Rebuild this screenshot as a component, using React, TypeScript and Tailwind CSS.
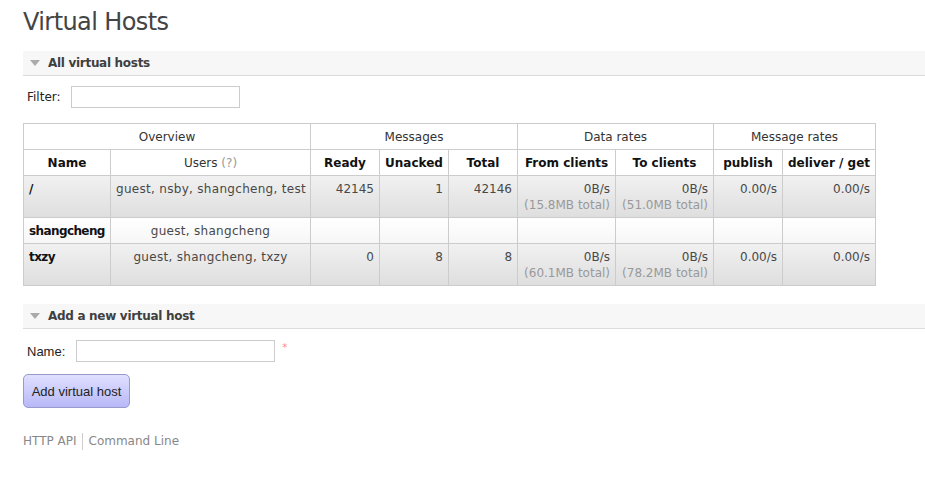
import React from 'react';

type Row = {
  name: string;
  users: string;
  ready?: string;
  unacked?: string;
  total?: string;
  fromRate?: string;
  fromTotal?: string;
  toRate?: string;
  toTotal?: string;
  publish?: string;
  deliver?: string;
};

const ROWS: Row[] = [
  {
    name: '/',
    users: 'guest, nsby, shangcheng, test',
    ready: '42145',
    unacked: '1',
    total: '42146',
    fromRate: '0B/s',
    fromTotal: '(15.8MB total)',
    toRate: '0B/s',
    toTotal: '(51.0MB total)',
    publish: '0.00/s',
    deliver: '0.00/s',
  },
  { name: 'shangcheng', users: 'guest, shangcheng' },
  {
    name: 'txzy',
    users: 'guest, shangcheng, txzy',
    ready: '0',
    unacked: '8',
    total: '8',
    fromRate: '0B/s',
    fromTotal: '(60.1MB total)',
    toRate: '0B/s',
    toTotal: '(78.2MB total)',
    publish: '0.00/s',
    deliver: '0.00/s',
  },
];

const SectionHeader: React.FC<{ title: string }> = ({ title }) => (
  <div className="flex h-[25px] items-center border-b border-[#dcdcdc] bg-[#f7f7f7] pl-[7px]">
    <span className="mr-[8px] h-0 w-0 border-x-[5px] border-t-[6px] border-x-transparent border-t-[#aaa]" />
    <span className="text-[12px] font-bold tracking-[-0.3px] text-[#404040]">{title}</span>
  </div>
);

const td = 'border border-[#ccc] px-[5px] pt-[5px] pb-[4px] align-top';

const App: React.FC = () => {
  return (
    <div
      className="min-h-[489px] bg-white pl-[23px] text-[12px] leading-[17px] text-[#484848]"
      style={{ fontFamily: '"DejaVu Sans", Verdana, sans-serif' }}
    >
      <h1 className="pt-[8px] text-[24px] leading-[28px] tracking-[-0.6px] text-[#444]">Virtual Hosts</h1>

      <div className="mt-[15px]">
        <SectionHeader title="All virtual hosts" />
        <div className="mt-[10px] flex items-center pl-[4px]">
          <span className="text-[#222]">Filter:</span>
          <input className="ml-[10px] h-[22px] w-[169px] border border-[#ccc] bg-white" />
        </div>

        <table className="mt-[15px] w-[852px] table-fixed border-collapse border border-[#ccc] leading-[16px]">
          <colgroup>
            <col className="w-[87px]" />
            <col className="w-[200px]" />
            <col className="w-[69px]" />
            <col className="w-[69px]" />
            <col className="w-[69px]" />
            <col className="w-[98px]" />
            <col className="w-[98px]" />
            <col className="w-[69px]" />
            <col className="w-[93px]" />
          </colgroup>
          <thead>
            <tr className="text-[#333]">
              <th colSpan={2} className={`${td} text-center font-normal`}>Overview</th>
              <th colSpan={3} className={`${td} text-center font-normal`}>Messages</th>
              <th colSpan={2} className={`${td} text-center font-normal`}>Data rates</th>
              <th colSpan={2} className={`${td} text-center font-normal`}>Message rates</th>
            </tr>
            <tr className="text-[#111]">
              <th className={`${td} text-center font-bold`}>Name</th>
              <th className={`${td} text-center font-normal text-[#333]`}>
                Users <span className="text-[#999]">(?)</span>
              </th>
              <th className={`${td} text-center font-bold`}>Ready</th>
              <th className={`${td} text-center font-bold`}>Unacked</th>
              <th className={`${td} text-center font-bold`}>Total</th>
              <th className={`${td} whitespace-nowrap text-center font-bold`}>From clients</th>
              <th className={`${td} text-center font-bold`}>To clients</th>
              <th className={`${td} text-center font-bold`}>publish</th>
              <th className={`${td} whitespace-nowrap text-center font-bold`}>deliver / get</th>
            </tr>
          </thead>
          <tbody>
            {ROWS.map((r, i) => (
              <tr
                key={r.name}
                className={
                  i % 2 === 0
                    ? 'bg-gradient-to-b from-[#f1f1f1] to-[#dedede]'
                    : 'bg-gradient-to-b from-[#ffffff] to-[#f6f6f6]'
                }
              >
                <td className={`${td} font-bold tracking-[-0.6px] text-[#111]`}>{r.name}</td>
                <td className={`${td} whitespace-nowrap text-center tracking-[0.3px]`}>{r.users}</td>
                <td className={`${td} text-right`}>{r.ready}</td>
                <td className={`${td} text-right`}>{r.unacked}</td>
                <td className={`${td} text-right`}>{r.total}</td>
                <td className={`${td} whitespace-nowrap text-right`}>
                  {r.fromRate}
                  {r.fromTotal && <div className="text-[#999]">{r.fromTotal}</div>}
                </td>
                <td className={`${td} whitespace-nowrap text-right`}>
                  {r.toRate}
                  {r.toTotal && <div className="text-[#999]">{r.toTotal}</div>}
                </td>
                <td className={`${td} text-right`}>{r.publish}</td>
                <td className={`${td} text-right`}>{r.deliver}</td>
              </tr>
            ))}
          </tbody>
        </table>
      </div>

      <div className="mt-[18px]">
        <SectionHeader title="Add a new virtual host" />
        <div className="mt-[11px] flex items-center pl-[4px]">
          <span
            className="text-[13px] text-[#222]"
            style={{ fontFamily: '"Liberation Sans", Arial, sans-serif' }}
          >
            Name:
          </span>
          <input className="ml-[11px] h-[22px] w-[199px] border border-[#ccc] bg-white" />
          <span className="ml-[7px] -mt-[8px] text-[10px] text-[#f88]">*</span>
        </div>
        <button
          className="mt-[12px] h-[34px] w-[107px] rounded-[5px] border border-[#99c] bg-gradient-to-b from-[#e0e0ff] to-[#b8b8f8] text-[13px] text-[#222]"
          style={{ fontFamily: '"Liberation Sans", Arial, sans-serif' }}
        >
          Add virtual host
        </button>
      </div>

      <div className="mt-[25px] flex items-center text-[#888]">
        <span className="pr-[5px]">HTTP API</span>
        <span className="border-l border-[#ccc] pl-[6px]">Command Line</span>
      </div>
    </div>
  );
};

export default App;
